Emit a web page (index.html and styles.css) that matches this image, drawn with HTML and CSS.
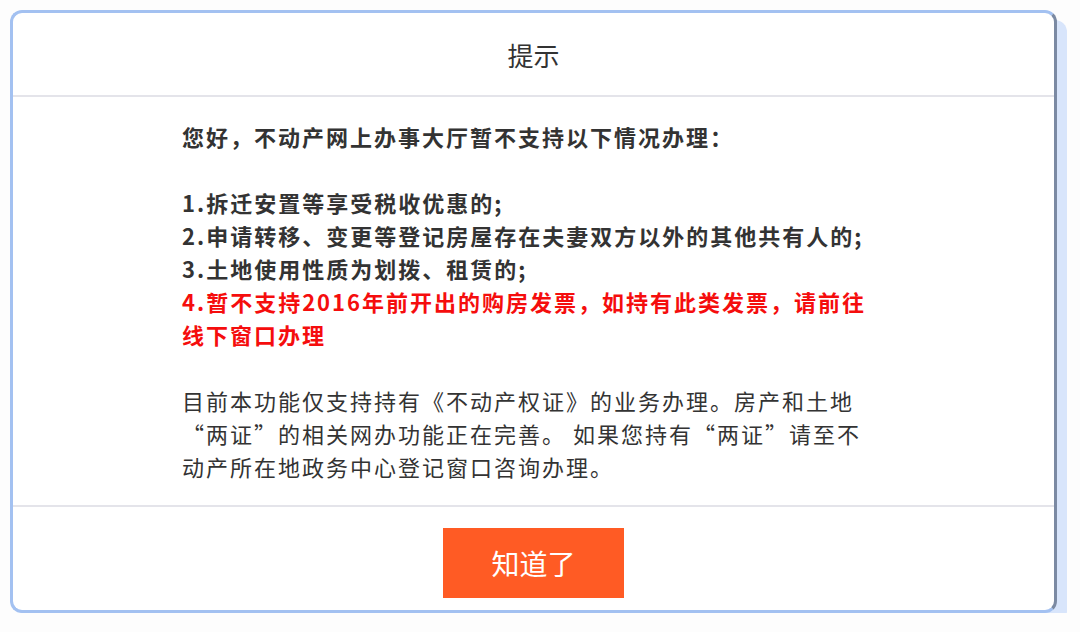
FILE: index.html
```html
<!DOCTYPE html>
<html lang="zh-CN">
  <head>
    <meta charset="UTF-8" />
    <meta name="viewport" content="width=device-width, initial-scale=1.0" />
    <title>提示</title>
    <link rel="stylesheet" href="styles.css">
  </head>
  <body>
    <div class="dialog">
      <div class="dialog-header">提示</div>

      <div class="dialog-body">
        <p class="notice-bold">您好，不动产网上办事大厅暂不支持以下情况办理：</p>
        <p class="blank"></p>
        <p class="notice-bold">1.拆迁安置等享受税收优惠的;</p>
        <p class="notice-bold">2.申请转移、变更等登记房屋存在夫妻双方以外的其他共有人的;</p>
        <p class="notice-bold">3.土地使用性质为划拨、租赁的;</p>
        <p class="notice-bold notice-red">4.暂不支持2016年前开出的购房发票，如持有此类发票，请前往<br>线下窗口办理</p>
        <p class="blank"></p>
        <p>目前本功能仅支持持有《不动产权证》的业务办理。房产和土地<br>“两证”的相关网办功能正在完善。 如果您持有“两证”请至不<br>动产所在地政务中心登记窗口咨询办理。</p>
      </div>

      <div class="dialog-footer">
        <button type="button" class="btn-ok">知道了</button>
      </div>
    </div>
  </body>
</html>
```

FILE: styles.css
```css
body {
  font-family: "Noto Sans CJK SC", "Noto Sans", sans-serif;
  background-color: #fdfdfd;
  margin: 0;
  padding: 10px 0 0 10px;
}
.dialog {
  width: 1047px;
  height: 603px;
  box-sizing: border-box;
  background-color: white;
  border: 3px solid #a3c1f1;
  border-right-color: #7b8aa3;
  border-radius: 12px;
  box-shadow: 10px 10px 0 #d8e5fb;
  display: flex;
  flex-direction: column;
}
.dialog-header {
  height: 82px;
  display: flex;
  justify-content: center;
  align-items: center;
  font-size: 26px;
  color: #333;
  border-bottom: 2px solid #e4e4ea;
}
.dialog-body {
  flex: 1;
  padding: 23px 0 0 169px;
  font-size: 22px;
  line-height: 33px;
  letter-spacing: 2px;
  color: #333;
  white-space: nowrap;
  border-bottom: 2px solid #e4e4ea;
}
.dialog-body p {
  margin: 0;
}
.dialog-body .blank {
  height: 33px;
}
.notice-bold {
  font-weight: 700;
}
.notice-red {
  color: #f50d0d;
}
.dialog-footer {
  height: 103px;
  box-sizing: border-box;
  padding-top: 21px;
  display: flex;
  justify-content: center;
  align-items: flex-start;
}
.btn-ok {
  width: 181px;
  height: 70px;
  background-color: #ff5b24;
  color: white;
  border: none;
  font-family: inherit;
  font-size: 28px;
  cursor: pointer;
}
.btn-ok:hover {
  background-color: #f04d16;
}
```
